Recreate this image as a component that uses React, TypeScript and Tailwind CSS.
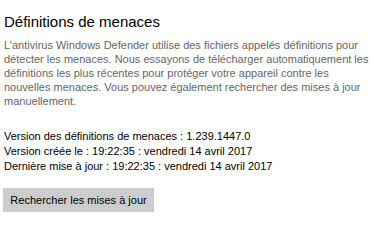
export default function App() {
  return (
    <div className="h-[230px] w-[374px] bg-white pl-[3px] pt-[13px] font-['Liberation_Sans',sans-serif]">
      <h1 className="pl-[1px] text-[15px] leading-[18px] text-black">Définitions de menaces</h1>
      <p className="mt-[7px] w-[369px] pl-[1px] text-[11px] leading-[14px] text-[#666]">
        L’antivirus Windows Defender utilise des fichiers appelés définitions pour détecter les menaces. Nous essayons de télécharger automatiquement les définitions les plus récentes pour protéger votre appareil contre les nouvelles menaces. Vous pouvez également rechercher des mises à jour manuellement.
      </p>
      <div className="mt-[21px] pl-[1px] text-[11px] leading-[15px] text-black">
        <p>Version des définitions de menaces : 1.239.1447.0</p>
        <p>Version créée le : 19:22:35 : vendredi 14 avril 2017</p>
        <p>Dernière mise à jour : 19:22:35 : vendredi 14 avril 2017</p>
      </div>
      <button className="mt-[14px] block h-[24px] w-[151px] bg-[#cccccc] text-[11px] text-black">
        Rechercher les mises à jour
      </button>
    </div>
  );
}
